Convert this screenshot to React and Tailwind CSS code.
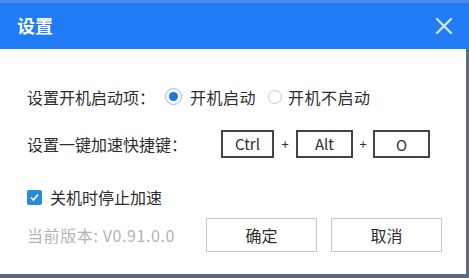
import React from "react";

export default function App() {
  const font = { fontFamily: '"Noto Sans CJK SC", "Noto Sans", sans-serif' };
  return (
    <div className="w-[469px] h-[278px] flex flex-col bg-white overflow-hidden" style={font}>
      <div className="h-[49px] flex items-center justify-between bg-[#1f7cf4] border-t-[3px] border-[#4b8ee6] pl-[17px] pr-[15px]">
        <span className="text-white text-[18px] font-bold leading-none mb-[2px]">设置</span>
        <svg width="18" height="18" viewBox="0 0 18 18" className="mr-[1px]">
          <path d="M2 2 L16 16 M16 2 L2 16" stroke="#d6e8ff" strokeWidth="2.2" strokeLinecap="round" />
        </svg>
      </div>
      <div className="flex-1 flex flex-col border-r-[3px] border-b-[4px] border-[#5d6a7d] pl-[27px] text-[#2e2e2e] text-[16px]">
        <div className="h-[31px] mt-[32px] flex items-center">
          <span className="w-[138px] whitespace-nowrap">设置开机启动项：</span>
          <span className="w-[17px] h-[17px] rounded-full border-[1.5px] border-[#8fb8ee] flex items-center justify-center">
            <span className="w-[9px] h-[9px] rounded-full bg-[#1f73e0]" />
          </span>
          <span className="ml-[8px] tracking-[0.5px]">开机启动</span>
          <span className="ml-[12px] w-[14px] h-[14px] rounded-full border border-[#c8c8c8]" />
          <span className="ml-[6px] tracking-[0.5px]">开机不启动</span>
        </div>
        <div className="h-[28px] mt-[18px] flex items-center">
          <span className="w-[194px] whitespace-nowrap">设置一键加速快捷键：</span>
          <span className="w-[53px] h-[28px] border-2 border-[#444] flex items-center justify-center text-[15px]">Ctrl</span>
          <span className="w-[22px] text-center text-[13px]">+</span>
          <span className="w-[57px] h-[28px] border-2 border-[#444] flex items-center justify-center text-[15px]">Alt</span>
          <span className="w-[20px] text-center text-[13px]">+</span>
          <span className="w-[57px] h-[28px] border-2 border-[#444] flex items-center justify-center text-[15px] pt-[3px]">O</span>
        </div>
        <div className="h-[20px] mt-[29px] flex items-center">
          <span className="w-[15px] h-[15px] bg-[#2b8ad6] flex items-center justify-center rounded-[2px]">
            <svg width="11" height="11" viewBox="0 0 11 11">
              <path d="M2 5.5 L4.5 8 L9 2.5" stroke="white" strokeWidth="1.6" fill="none" />
            </svg>
          </span>
          <span className="ml-[8px]">关机时停止加速</span>
        </div>
        <div className="mt-[11px] flex items-center">
          <span className="w-[179px] text-[#b4b4b4] text-[16px] tracking-[0.6px] whitespace-nowrap">当前版本: V0.91.0.0</span>
          <button className="w-[111px] h-[34px] border border-[#c6c6c6] flex items-center justify-center text-[16px]">确定</button>
          <button className="ml-[14px] w-[111px] h-[34px] border border-[#c6c6c6] flex items-center justify-center text-[16px]">取消</button>
        </div>
      </div>
    </div>
  );
}
